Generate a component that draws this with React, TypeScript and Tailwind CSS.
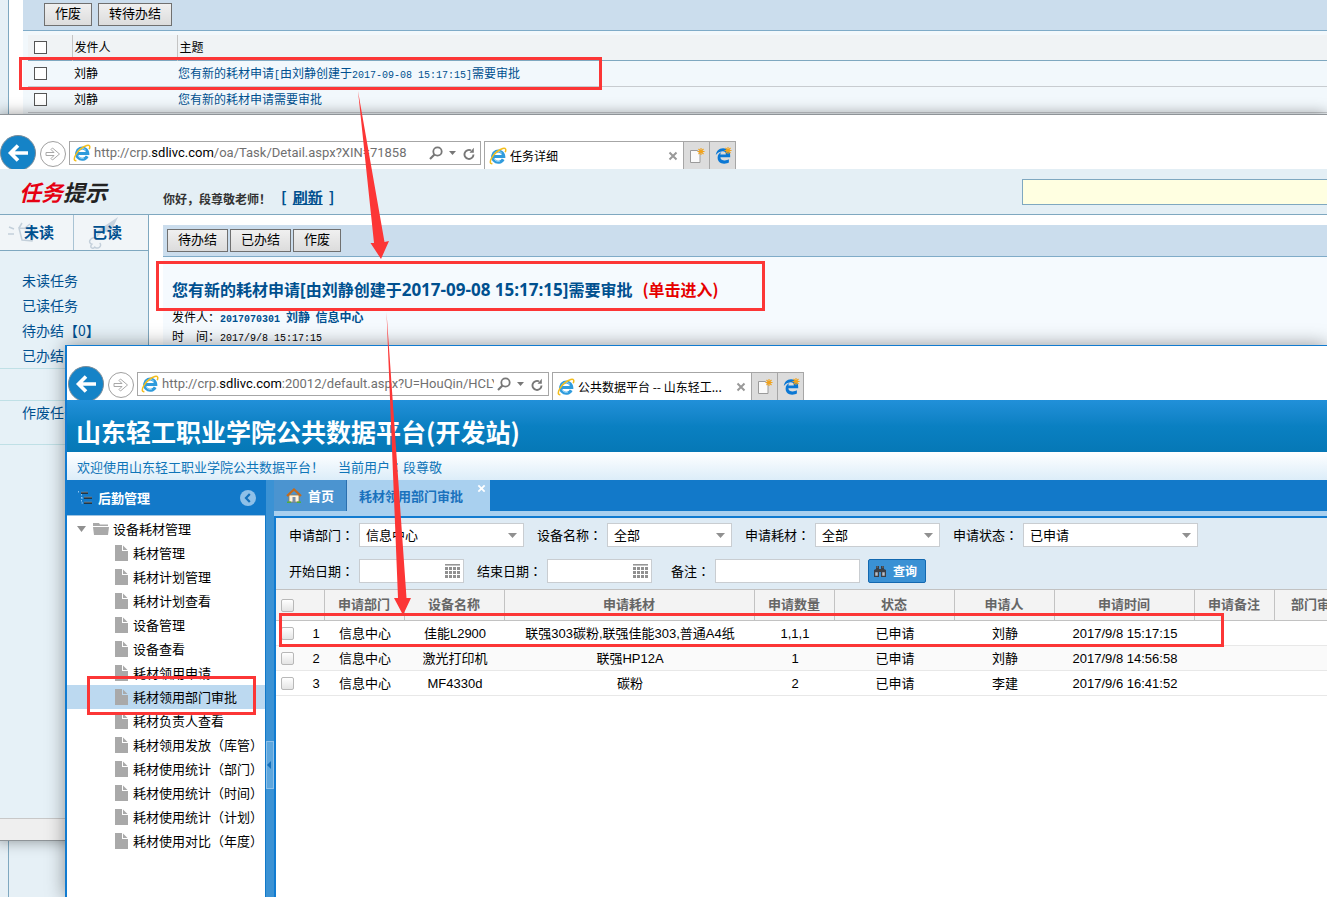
import React from "react";
import { FaEdgeLegacy } from "react-icons/fa";

const menus = [
  "耗材管理",
  "耗材计划管理",
  "耗材计划查看",
  "设备管理",
  "设备查看",
  "耗材领用申请",
  "耗材领用部门审批",
  "耗材负责人查看",
  "耗材领用发放（库管）",
  "耗材使用统计（部门）",
  "耗材使用统计（时间）",
  "耗材使用统计（计划）",
  "耗材使用对比（年度）",
];

const columns = [
  { title: "申请部门", width: "w-[80px]" },
  { title: "设备名称", width: "w-[100px]" },
  { title: "申请耗材", width: "w-[250px]" },
  { title: "申请数量", width: "w-[80px]" },
  { title: "状态", width: "w-[120px]" },
  { title: "申请人", width: "w-[100px]" },
  { title: "申请时间", width: "w-[140px]" },
  { title: "申请备注", width: "w-[80px]" },
  { title: "部门审批", width: "w-[86px]" },
];

const rows = [
  ["信息中心", "佳能L2900", "联强303碳粉,联强佳能303,普通A4纸", "1,1,1", "已申请", "刘静", "2017/9/8 15:17:15", "", ""],
  ["信息中心", "激光打印机", "联强HP12A", "1", "已申请", "刘静", "2017/9/8 14:56:58", "", ""],
  ["信息中心", "MF4330d", "碳粉", "2", "已申请", "李建", "2017/9/6 16:41:52", "", ""],
];

const IeIcon = () => (
  <svg viewBox="0 0 18 18" className="h-[18px] w-[18px] shrink-0">
    <path
      d="M14.2 12.2A5.6 5.6 0 1 1 14.8 9.4H5"
      fill="none"
      stroke="#2f9bdc"
      strokeWidth="3"
    />
    <path d="M4.500 8.500A4.700 4.700 0 0 1 13 6.400M5 11.500a4.500 4.500 0 0 0 6 2.600" fill="none" stroke="#8fd3f6" strokeWidth="1" />
    <path
      d="M3.4 16.6C1 17.2 .6 14.6 2.6 11 5 6.6 10 2.4 13.8 1.4c3-.8 3.6 1.2 2.4 3.8"
      fill="none"
      stroke="#f3bd1c"
      strokeWidth="1.5"
    />
  </svg>
);

const CloseIcon = ({ className }: { className: string }) => (
  <svg viewBox="0 0 10 10" className={className}>
    <path d="M1.500 1.500l7 7M8.500 1.500l-7 7" stroke="currentColor" strokeWidth="2" />
  </svg>
);

const Spark = () => (
  <path
    d="M13 1v7M9.500 4.500h7M10.500 2l5 5M15.500 2l-5 5"
    stroke="#f0a21c"
    strokeWidth="1.100"
    fill="none"
  />
);

interface BrowserBarProps {
  id: string;
  domain: string;
  path: string;
  title: string;
}

const BrowserBar = ({ id, domain, path, title }: BrowserBarProps) => (
  <div className="flex h-[54px] items-start overflow-hidden bg-white pt-5 pl-px">
    <button
      aria-label="后退"
      className="flex h-9 w-9 shrink-0 items-center justify-center rounded-full border border-[#7c8c98] bg-[#1583c7]"
    >
      <svg viewBox="0 0 22 20" className="h-5 w-[22px]">
        <path d="M21 10H4M11 2.5L3.5 10l7.500 7.500" fill="none" stroke="#fff" strokeWidth="3.600" />
      </svg>
    </button>
    <button
      aria-label="前进"
      className="mt-[6px] ml-1 flex h-[26px] w-[26px] shrink-0 items-center justify-center rounded-full border border-[#a0a0a0]"
    >
      <svg viewBox="0 0 16 14" className="h-[14px] w-4">
        <path
          d="M1 5.500h8L6 2.500 7.500 1l7 6-7 6L6 11.500 9 8.500H1z"
          fill="#fff"
          stroke="#a8a8a8"
          strokeWidth="1"
        />
      </svg>
    </button>
    <div className="mt-[6px] ml-[3px] flex h-6 w-[412px] shrink-0 items-center border border-[#a6a6a6] pl-[3px]">
      <IeIcon />
      <div
        id={id}
        className="ml-[3px] w-[332px] overflow-hidden font-['Roboto',sans-serif] text-[13px] whitespace-nowrap text-[#707070]"
      >
        http://crp.<span className="text-black">{domain}</span>
        {path}
      </div>
      <button aria-label="搜索" className="ml-[3px]">
        <svg viewBox="0 0 14 14" className="h-[14px] w-[14px]">
          <circle cx="8.500" cy="5.500" r="4.200" fill="none" stroke="#777" strokeWidth="1.800" />
          <path d="M5.500 8.500L1 13" stroke="#777" strokeWidth="2.200" />
        </svg>
      </button>
      <svg viewBox="0 0 7 4" className="ml-[6px] h-1 w-[7px]">
        <path d="M0 0h7L3.500 4z" fill="#777" />
      </svg>
      <button aria-label="刷新页面" className="ml-[7px]">
        <svg viewBox="0 0 12 13" className="h-[13px] w-3">
          <path d="M10.500 7.500A4.500 4.500 0 1 1 8 3.400" fill="none" stroke="#777" strokeWidth="1.900" />
          <path d="M6.500 5.800L10.800 5.800 10.800 .8z" fill="#777" />
        </svg>
      </button>
    </div>
    <div className="mt-[6px] ml-[3px] flex h-7 w-[200px] shrink-0 items-center border border-b-0 border-[#a6a6a6] pl-1">
      <IeIcon />
      <span className="ml-[3px] grow text-[12px] whitespace-nowrap text-black">{title}</span>
      <button aria-label="关闭标签页" className="mr-[5px] text-[#999]">
        <CloseIcon className="h-[10px] w-[10px]" />
      </button>
    </div>
    <button
      aria-label="新建标签页"
      className="mt-[6px] flex h-7 w-[26px] shrink-0 items-center justify-center border-t border-r border-[#a6a6a6] bg-[#dcdcdc]"
    >
      <svg viewBox="0 0 17 17" className="h-[17px] w-[17px]">
        <path d="M2.500 3.500h7l2.500 3v9H2.500z" fill="#fafafa" stroke="#9a9a9a" />
        <Spark />
      </svg>
    </button>
    <button
      aria-label="Microsoft Edge"
      className="relative mt-[6px] flex h-7 w-[26px] shrink-0 items-center justify-center border-t border-r border-[#a6a6a6] bg-[#dcdcdc]"
    >
      <FaEdgeLegacy className="h-4 w-4 text-[#0b78d4]" />
      <svg viewBox="0 0 17 17" className="absolute top-1 left-[5px] h-[17px] w-[17px]">
        <Spark />
      </svg>
    </button>
  </div>
);

const GrayButton = ({ children }: { children: React.ReactNode }) => (
  <button className="h-[23px] border border-[#707070] bg-linear-to-b from-[#f0f0f0] to-[#dcdcdc] px-[10px] pb-[3px] text-[13px] leading-4 text-black">
    {children}
  </button>
);

const Mono = ({ children }: { children: React.ReactNode }) => (
  <span className="font-['Liberation_Mono',monospace] text-[10px] leading-none">{children}</span>
);

// the TC face centres the full-width colon in its box
const Colon = () => <span className="font-['Noto_Sans_CJK_TC',sans-serif]">：</span>;

const MailCheck = ({ label }: { label: string }) => (
  <input
    type="checkbox"
    aria-label={label}
    className="ml-[6px] block h-[13px] w-[13px] appearance-none border border-[#555] bg-white"
  />
);

const MailList = () => (
  <div className="absolute inset-0 flex bg-[#e6f0f6]">
    <div className="w-[9px] shrink-0 border-r border-[#7fa8c0]" />
    <div className="h-[114px] grow bg-white pl-[14px]">
      <div className="flex h-[31px] items-start gap-[6px] border-b border-[#7fabc8] bg-[#cbdded] pt-[3px] pl-[21px]">
        <GrayButton>作废</GrayButton>
        <GrayButton>转待办结</GrayButton>
      </div>
      <div className="h-[83px] bg-[#f2f8fc] pt-1 pl-[5px]">
        <table className="w-full table-fixed border-collapse text-left text-[12px]">
          <thead>
            <tr className="h-[25px] border-b border-[#7fa8c0] bg-[#f0f3f5]">
              <th className="w-[44px] border-r border-[#c4c4c4]">
                <MailCheck label="全选邮件" />
              </th>
              <th className="w-[105px] border-r border-[#c4c4c4] pl-[2px] font-normal">发件人</th>
              <th className="pl-[2px] font-normal">主题</th>
            </tr>
          </thead>
          <tbody>
            <tr className="h-[26px] border-b border-[#c8ccd0]">
              <td>
                <MailCheck label="选择第一封" />
              </td>
              <td className="pl-[2px]">刘静</td>
              <td className="pl-px">
                <a href="#task" className="text-[#00508f]">
                  您有新的耗材申请<Mono>[</Mono>由刘静创建于<Mono>2017-09-08 15:17:15]</Mono>需要审批
                </a>
              </td>
            </tr>
            <tr className="h-[26px] border-b border-[#c8ccd0]">
              <td>
                <MailCheck label="选择第二封" />
              </td>
              <td className="pl-[2px]">刘静</td>
              <td className="pl-px">
                <a href="#task2" className="text-[#00508f]">
                  您有新的耗材申请需要审批
                </a>
              </td>
            </tr>
          </tbody>
        </table>
      </div>
    </div>
  </div>
);

const TaskWindow = () => (
  <div className="absolute top-[114px] right-0 -left-[3px] flex h-[727px] flex-col border-t border-b border-l-2 border-[#8f9498] bg-white shadow-[0_0_14px_rgba(0,0,0,0.4)]">
    <BrowserBar id="task-url" domain="sdlivc.com" path="/oa/Task/Detail.aspx?XIN=71858" title="任务详细" />
    <div className="flex h-[46px] shrink-0 items-start border-b border-[#7fa8c0] bg-[#e4eff5] pl-5">
      <h1 className="w-[144px] pt-[6px] text-[22px] leading-8 font-bold text-[#222] italic">
        <span className="text-[#e60012]">任务</span>提示
      </h1>
      <p className="pt-5 text-[12px] leading-5 font-bold text-[#333]">你好，段尊敬老师！</p>
      <p className="ml-[10px] flex gap-[6px] pt-[18px] text-[15px] leading-5 font-bold text-[#00508f]">
        <span>[</span>
        <a href="#refresh" className="underline">
          刷新
        </a>
        <span>]</span>
      </p>
      <div className="mt-[10px] ml-auto h-[26px] w-[305px] border border-r-0 border-[#7fa8c0] bg-[#ffffe1]" />
    </div>
    <div className="flex grow">
      <div className="w-[150px] shrink-0 border-r border-[#7fa8c0] bg-[#e6f1f7] text-[14px] text-[#00508f]">
        <div className="flex h-9 border-b border-[#7fa8c0] bg-[#f1f5f8] text-[15px] font-bold">
          <button className="relative w-[75px] border-r border-[#a9c3d4] pl-[6px] text-center">
            <svg viewBox="0 0 30 24" className="absolute top-1 left-2 h-6 w-[30px]">
              <path
                d="M2 8l5 2M1 15h6M12 9l16 1-3 12-10-1zM12 9l3-5M18 9l5-4"
                fill="none"
                stroke="#c3cfda"
                strokeWidth="1.500"
              />
            </svg>
            <span className="relative">未读</span>
          </button>
          <button className="relative grow pr-2 text-center">
            <svg viewBox="0 0 36 36" className="absolute top-0 left-3 h-[35px] w-[35px]">
              <path d="M12 16L33 2l-8 16-7-1-7 6z" fill="#c6d2de" />
              <path
                d="M11 23c-8 0-9 6-5 7-3 3 1 6 3 3 4 3 8-2 5-4"
                fill="none"
                stroke="#c3cfda"
                strokeWidth="1.500"
              />
            </svg>
            <span className="relative">已读</span>
          </button>
        </div>
        <nav className="border-b border-[#bfe0e6] pt-[17px] pl-[23px] leading-[25px]">
          <a href="#unread" className="block">未读任务</a>
          <a href="#read" className="block">已读任务</a>
          <a href="#todo" className="block">待办结【0】</a>
          <a href="#done" className="block">已办结【0】</a>
        </nav>
        <div className="h-8 border-b border-[#bfe0e6]" />
        <div className="h-11 border-b border-[#bfe0e6] pl-[23px] leading-[22px]">
          <a href="#void">作废任务</a>
        </div>
      </div>
      <div className="flex grow flex-col pt-[10px] pl-[14px]">
        <div className="flex h-8 items-start gap-[2px] border-b border-[#7fabc8] bg-[#cbdded] pt-1 pl-1">
          <GrayButton>待办结</GrayButton>
          <GrayButton>已办结</GrayButton>
          <GrayButton>作废</GrayButton>
        </div>
        <div className="grow bg-[#f5fafe] pt-5 pl-[9px] text-[12px]">
          <h2 className="mb-[6px] h-6 text-[16px] leading-6 font-bold text-[#00508f]">
            您有新的耗材申请
            <span className="font-['Open_Sans',sans-serif] text-[17px] leading-none">[</span>
            由刘静创建于
            <span className="font-['Open_Sans',sans-serif] text-[17px] leading-none">2017-09-08 15:17:15]</span>
            需要审批
            <a href="#enter" className="ml-[10px] text-[#e60000]">
              (单击进入)
            </a>
          </h2>
          <p className="h-[19px] leading-[19px]">
            发件人：
            <b className="text-[#00508f]">
              <Mono>2017070301 </Mono> 刘静 &nbsp;信息中心
            </b>
          </p>
          <p className="h-[19px] leading-[19px]">
            时　间：<Mono>2017/9/8 15:17:15</Mono>
          </p>
        </div>
      </div>
    </div>
    <div className="h-[22px] shrink-0 border-t border-[#c8c8c8] bg-[#efefef]" />
  </div>
);

const FileIcon = () => (
  <svg viewBox="0 0 13 16" className="h-4 w-[13px] shrink-0">
    <path d="M0 0h7v6h6v10H0z" fill="#a9a9a9" />
    <path d="M8 .5V5h4.500z" fill="#a9a9a9" />
  </svg>
);

const Sidebar = () => (
  <aside className="w-[198px] shrink-0 bg-white">
    <div className="flex h-9 items-center border-b border-[#9fc4e2] bg-[#1279c9] pr-[9px] pl-[10px] text-white">
      <svg viewBox="0 0 16 16" className="h-4 w-4">
        <path d="M4 3h7M7 8h8M7 13h8" stroke="#222" strokeWidth="1.500" />
        <path d="M4 2.200h7M7 7.200h8M7 12.200h8" stroke="#9a8a80" strokeWidth=".7" />
        <path d="M1.500 1v2M4.500 4v9M4.500 8h2M4.500 13h2" stroke="#8fc4f0" strokeDasharray="1.500 1.500" />
      </svg>
      <span className="ml-[5px] grow text-[13px] font-bold">后勤管理</span>
      <button aria-label="收起菜单">
        <svg viewBox="0 0 16 16" className="h-4 w-4">
          <circle cx="8" cy="8" r="8" fill="#8fc0e8" />
          <path d="M9.800 4L6 8l3.800 4" fill="none" stroke="#1470bb" strokeWidth="2.200" />
        </svg>
      </button>
    </div>
    <ul className="pt-px text-[13px] leading-6 whitespace-nowrap">
      <li className="flex h-6 items-center pl-[10px]">
        <svg viewBox="0 0 9 6" className="h-[6px] w-[9px]">
          <path d="M0 0h9L4.500 6z" fill="#909090" />
        </svg>
        <svg viewBox="0 0 16 12" className="mr-1 ml-[7px] h-3 w-4">
          <path d="M0 0h6l1 1.500h8V3H0z" fill="#a9a9a9" />
          <path d="M0 4h16l-1 8H1z" fill="#a9a9a9" />
        </svg>
        设备耗材管理
      </li>
      {menus.map((ele, index) => (
        <li key={index} className={index === 6 ? "bg-[#bcd9f0]" : ""}>
          <a href="#menu" className="flex h-6 items-center gap-[5px] pl-12">
            <FileIcon />
            {ele}
          </a>
        </li>
      ))}
    </ul>
  </aside>
);

interface FieldProps {
  id: string;
  label: string;
  value?: string;
  width: string;
}

const SelectField = ({ id, label, value, width }: FieldProps) => (
  <div className="flex shrink-0 items-center">
    <label htmlFor={id} className="w-[70px]">
      {label}
      <Colon />
    </label>
    <div className={`relative ${width}`}>
      <select
        id={id}
        className="block h-6 w-full appearance-none border border-[#c9cdd1] bg-white pl-[6px] text-[13px] leading-5"
      >
        <option>{value}</option>
      </select>
      <svg viewBox="0 0 9 5" className="pointer-events-none absolute top-[10px] right-[7px] h-[5px] w-[9px]">
        <path d="M0 0h9L4.500 5z" fill="#909090" />
      </svg>
    </div>
  </div>
);

const DateField = ({ id, label, width }: FieldProps) => (
  <div className="flex shrink-0 items-center">
    <label htmlFor={id} className="w-[70px]">
      {label}
      <Colon />
    </label>
    <div className={`relative ${width}`}>
      <input id={id} type="text" className="block h-6 w-full border border-[#c9cdd1] bg-white pl-1" />
      <svg viewBox="0 0 15 14" className="absolute top-[5px] right-1 h-[14px] w-[15px]">
        <path d="M0 .8h15" stroke="#909090" strokeWidth="1.500" />
        <path
          d="M0 4.500h15M0 8.500h15M0 12.500h15"
          stroke="#909090"
          strokeWidth="3"
          strokeDasharray="3 1"
        />
      </svg>
    </div>
  </div>
);

const GridCheck = ({ label }: { label: string }) => (
  <input
    type="checkbox"
    aria-label={label}
    className="ml-[5px] block h-[13px] w-[13px] appearance-none rounded-[2px] border border-[#b8b8b8] bg-linear-to-b from-white to-[#e4e4e4]"
  />
);

const ApprovalPage = () => (
  <main className="flex min-w-0 grow flex-col">
    <div className="flex h-[31px] bg-[#1279c9] text-[13px] font-bold">
      <button className="flex w-[73px] shrink-0 items-center border-r border-[#2a6fae] bg-[#4b94d0] pl-3 text-white">
        <svg viewBox="0 0 16 15" className="mr-[6px] h-[15px] w-4">
          <path d="M3 7h10v7H3z" fill="#fff3dc" stroke="#9a7a4a" strokeWidth=".8" />
          <path d="M1 8l7-6.500L15 8" fill="none" stroke="#c46a1c" strokeWidth="2.200" />
          <path d="M6.500 9h3v5h-3z" fill="#7c8fa6" />
          <path d="M1 14.300h4M11 14.300h4" stroke="#4fae3c" strokeWidth="1.500" />
        </svg>
        首页
      </button>
      <div className="relative flex w-[143px] shrink-0 items-center justify-between bg-[#a9d0ef] pl-3 text-[#1a72bd]">
        <a href="#approval">耗材领用部门审批</a>
        <button aria-label="关闭" className="absolute top-1 right-1 text-white">
          <CloseIcon className="h-[9px] w-[9px]" />
        </button>
      </div>
    </div>
    <div className="h-[7px] border-b-2 border-[#117bd0] bg-[#a9d0ef]" />
    <div className="grow border-l-2 border-[#117bd0]">
      <form className="flex h-[71px] flex-col gap-3 bg-[#dfebf4] pt-[5px] pl-[13px] text-[13px] whitespace-nowrap">
        <div className="flex gap-[13px]">
          <SelectField id="dept" label="申请部门" value="信息中心" width="w-[165px]" />
          <SelectField id="device" label="设备名称" value="全部" width="w-[125px]" />
          <SelectField id="material" label="申请耗材" value="全部" width="w-[125px]" />
          <SelectField id="status" label="申请状态" value="已申请" width="w-[175px]" />
        </div>
        <div className="flex gap-[13px]">
          <DateField id="start" label="开始日期" width="w-[105px]" />
          <DateField id="end" label="结束日期" width="w-[105px]" />
          <div className="ml-[6px] flex items-center">
            <label htmlFor="remark" className="w-11">
              备注
              <Colon />
            </label>
            <input id="remark" type="text" className="h-6 w-[145px] border border-[#c9cdd1] bg-white pl-1" />
            <button
              type="button"
              className="ml-2 flex h-6 w-[58px] items-center rounded-[2px] border border-[#1268b0] bg-[#3a91d4] pl-1 text-[12px] font-bold text-white"
            >
              <svg viewBox="0 0 14 14" className="mr-[6px] h-[14px] w-[14px]">
                <path d="M3 5V2h3v3h2V2h3v3l2 1v7H8V8H6v5H1V6z" fill="#3b3f46" />
                <path d="M2.500 8.500h2v3h-2zM9.500 8.500h2v3h-2zM3.500 3h1.500M9 3h1.500" fill="#b8bec8" stroke="#b8bec8" strokeWidth=".5" />
              </svg>
              查询
            </button>
          </div>
        </div>
      </form>
      <table className="w-[1084px] table-fixed border-collapse text-center font-['Liberation_Sans','Noto_Sans_CJK_SC',sans-serif] text-[13px] whitespace-nowrap">
        <thead>
          <tr className="h-[31px] border-t border-b border-[#c2c2c2] bg-[#f3f3f3] text-[#666]">
            <th className="w-[32px]">
              <GridCheck label="全选" />
            </th>
            <th className="w-[16px] border-r border-[#c2c2c2]" />
            {columns.map((ele, index) => (
              <th key={index} className={`border-r border-[#c2c2c2] font-bold ${ele.width}`}>
                {ele.title}
              </th>
            ))}
          </tr>
        </thead>
        <tbody>
          {rows.map((row, index) => (
            <tr key={index} className={`h-[25px] border-b border-[#e8e8e8] ${index === 1 ? "bg-[#fafafa]" : "bg-white"}`}>
              <td>
                <GridCheck label={`选择第${index + 1}行`} />
              </td>
              <td className="pt-[2px]">{index + 1}</td>
              {row.map((cell, i) => (
                <td key={i} className="pt-[2px] pl-[2px]">
                  {cell}
                </td>
              ))}
            </tr>
          ))}
        </tbody>
      </table>
    </div>
  </main>
);

const PlatformWindow = () => (
  <div className="absolute top-[345px] right-0 bottom-0 left-[65px] flex flex-col overflow-hidden border-t border-l-2 border-[#117bd0] bg-white">
    <BrowserBar
      id="platform-url"
      domain="sdlivc.com"
      path=":20012/default.aspx?U=HouQin/HCLY"
      title="公共数据平台 -- 山东轻工..."
    />
    <header className="h-[52px] shrink-0 bg-linear-to-b from-[#2190d9] via-[#0a80c2] to-[#0678b6] pt-[13px] pl-[9px] text-[25px] leading-9 font-bold text-white">
      山东轻工职业学院公共数据平台(开发站)
    </header>
    <div className="h-7 shrink-0 bg-linear-to-b from-white to-[#dcedf9] pl-[10px] text-[13px] leading-[30px] text-[#0f75b8]">
      欢迎使用山东轻工职业学院公共数据平台！
      <span className="ml-[14px]">
        当前用户
        <Colon />
        段尊敬
      </span>
    </div>
    <div className="flex grow">
      <Sidebar />
      <div className="flex w-[9px] shrink-0 items-center border-l border-[#1279c9] bg-[#3b92d4]">
        <button aria-label="折叠" className="mt-[152px] flex h-12 w-2 items-center border border-[#8fc0e8] bg-[#5fa7dd]">
          <svg viewBox="0 0 4 8" className="h-2 w-1">
            <path d="M4 0v8L0 4z" fill="#1470bb" />
          </svg>
        </button>
      </div>
      <ApprovalPage />
    </div>
  </div>
);

// red marks that walk through the three steps
const Marks = () => (
  <div className="pointer-events-none absolute inset-0">
    <div className="absolute top-[57px] left-[19px] h-[33px] w-[583px] border-3 border-[#fc3636]" />
    <div className="absolute top-[261px] left-[156px] h-[50px] w-[609px] border-3 border-[#fc3636]" />
    <div className="absolute top-[676px] left-[87px] h-[39px] w-[169px] border-3 border-[#fc3636]" />
    <div className="absolute top-[613px] left-[279px] h-[34px] w-[945px] border-3 border-[#fc3636]" />
    <svg viewBox="0 0 420 620" className="absolute top-0 left-0 h-[620px] w-[420px]">
      <path d="M358 91L374 243H370.500L381 259 389 241 384.500 242z" fill="#fc3636" />
      <path d="M386.500 312L398 598H394L403 615 411 598H406.500z" fill="#fc3636" />
    </svg>
  </div>
);

const App = () => {
  return (
    <div className="relative h-screen w-full overflow-hidden bg-white font-['Noto_Sans_CJK_SC',sans-serif] text-black">
      <MailList />
      <TaskWindow />
      <div className="absolute top-[345px] right-0 bottom-0 left-[65px] shadow-[0_0_18px_rgba(0,0,0,0.4)]" />
      <PlatformWindow />
      <Marks />
    </div>
  );
};

export default App;
